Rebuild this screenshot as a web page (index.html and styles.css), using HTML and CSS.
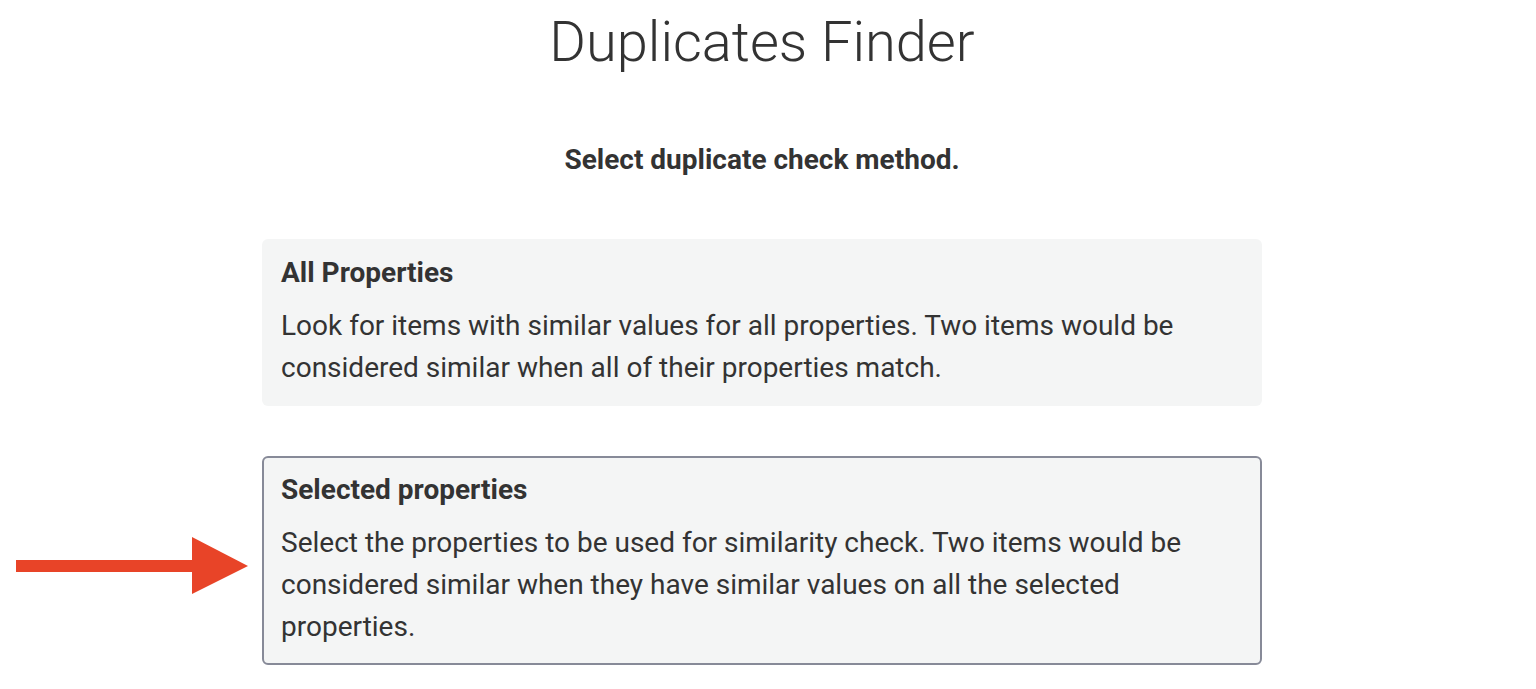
FILE: index.html
```html
<!DOCTYPE html>
<html>
<head>
<meta charset="utf-8">
<link rel="stylesheet" href="styles.css">
</head>
<body>
<main class="page">
  <h1 class="title">Duplicates Finder</h1>
  <p class="subtitle">Select duplicate check method.</p>
  <div class="options">
    <div class="option">
      <div class="option-title">All Properties</div>
      <div class="option-desc">Look for items with similar values for all properties. Two items would be considered similar when all of their properties match.</div>
    </div>
    <div class="option-row">
      <svg class="arrow" width="262" height="60" viewBox="0 0 262 60">
        <rect x="16" y="23" width="178" height="12" fill="#e84428"/>
        <polygon points="192,0 248,29 192,57" fill="#e84428"/>
      </svg>
      <div class="option selected">
        <div class="option-title">Selected properties</div>
        <div class="option-desc">Select the properties to be used for similarity check. Two items would be considered similar when they have similar values on all the selected properties.</div>
      </div>
    </div>
  </div>
</main>
</body>
</html>
```
FILE: styles.css
```css
html, body {
  margin: 0;
  padding: 0;
  background: #ffffff;
}
body {
  font-family: Roboto, "Liberation Sans", sans-serif;
  color: #333333;
}
.page {
  width: 1524px;
  display: flex;
  flex-direction: column;
  align-items: center;
}
.title {
  margin: 6px 0 0 0;
  font-size: 56px;
  font-weight: 300;
  line-height: 72px;
  color: #333333;
}
.subtitle {
  margin: 66px 0 0 0;
  font-size: 28px;
  font-weight: 700;
  line-height: 32px;
}
.options {
  margin-top: 63px;
  display: flex;
  flex-direction: column;
  gap: 50px;
  width: 1000px;
}
.option-row {
  position: relative;
}
.arrow {
  position: absolute;
  left: -262px;
  top: 81px;
}
.option {
  box-sizing: border-box;
  width: 1000px;
  background: #f4f5f5;
  border: 2px solid transparent;
  border-radius: 6px;
  padding: 15px 17px 15px 17px;
}
.option.selected {
  border-color: #878a98;
}
.option-title {
  font-size: 28px;
  font-weight: 700;
  line-height: 34px;
  margin-bottom: 15px;
}
.option-desc {
  font-size: 28px;
  line-height: 42px;
}
```
